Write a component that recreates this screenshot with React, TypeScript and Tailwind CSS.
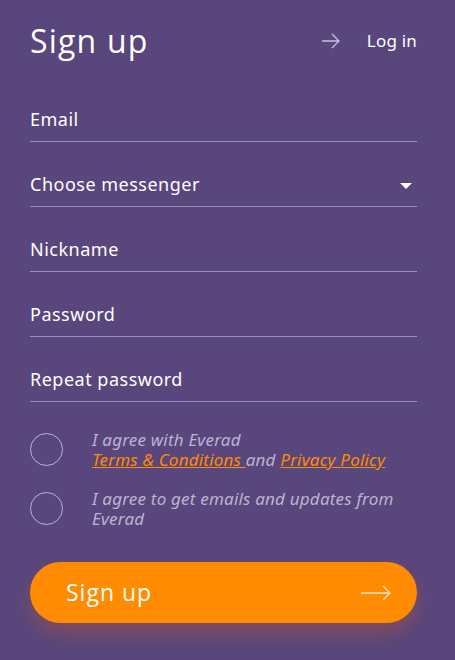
import React from "react";

const fields = ["Email", "Choose messenger", "Nickname", "Password", "Repeat password"];

const Arrow = ({ w, className }: { w: number; className?: string }) => (
	<svg width={w} height="16" viewBox={`0 0 ${w} 16`} fill="none" className={className}>
		<path d={`M0 8 H${w - 1} M${w - 8} 1 L${w - 1} 8 L${w - 8} 15`} stroke="currentColor" strokeWidth="1.3" />
	</svg>
);

export default function App() {
	return (
		<div
			className="w-[455px] h-[660px] bg-[#58467c] pl-[30px] pr-[38px] pt-[22px] text-white"
			style={{ fontFamily: '"Noto Sans", "Open Sans", sans-serif' }}
		>
			<div className="flex items-center justify-between">
				<h1 className="text-[32px] leading-[38px] tracking-[1.2px]" style={{ fontFamily: '"Open Sans", sans-serif' }}>
					Sign up
				</h1>
				<div className="flex items-center gap-[27px]">
					<Arrow w={18} className="text-[#c9c0dc]" />
					<span className="text-[17px] tracking-[0.2px]">Log in</span>
				</div>
			</div>

			<div className="mt-[41px] flex flex-col gap-[24px]">
				{fields.map((f, i) => (
					<div key={f} className="flex items-center justify-between border-b border-[#9a8fb4] h-[41px] pb-[4px]">
						<span className="text-[18px] tracking-[0.5px]">{f}</span>
						{i === 1 && (
							<svg width="12" height="7" viewBox="0 0 12 7" className="mr-[5px] mt-[4px]">
								<path d="M0 0 H12 L6 6 Z" fill="white" />
							</svg>
						)}
					</div>
				))}
			</div>

			<div className="mt-[26px] flex flex-col gap-[17px] text-[17px] italic leading-[20px] tracking-[0.2px] text-[#bcb2d3]">
				<div className="flex items-center gap-[29px]">
					<span className="w-[33px] h-[33px] shrink-0 rounded-full border border-[#bcb2d3]" />
					<div className="pt-[2px]">
						I agree with Everad
						<br />
						<a className="text-[#ff8c00] underline">Terms &amp; Conditions </a> and{" "}
						<a className="text-[#ff8c00] underline">Privacy Policy</a>
					</div>
				</div>
				<div className="flex items-center gap-[29px]">
					<span className="w-[33px] h-[33px] shrink-0 rounded-full border border-[#bcb2d3]" />
					<div className="pt-[2px]">I agree to get emails and updates from Everad</div>
				</div>
			</div>

			<button className="mt-[33px] w-full h-[61px] rounded-full bg-[#ff8c00] flex items-center justify-between pl-[36px] pr-[26px] shadow-[0_10px_20px_rgba(255,100,0,0.25)]">
				<span className="text-[23px] font-medium tracking-[1px]" style={{ fontFamily: '"Open Sans", sans-serif' }}>
					Sign up
				</span>
				<Arrow w={30} className="text-[#ffe6c7]" />
			</button>
		</div>
	);
}
